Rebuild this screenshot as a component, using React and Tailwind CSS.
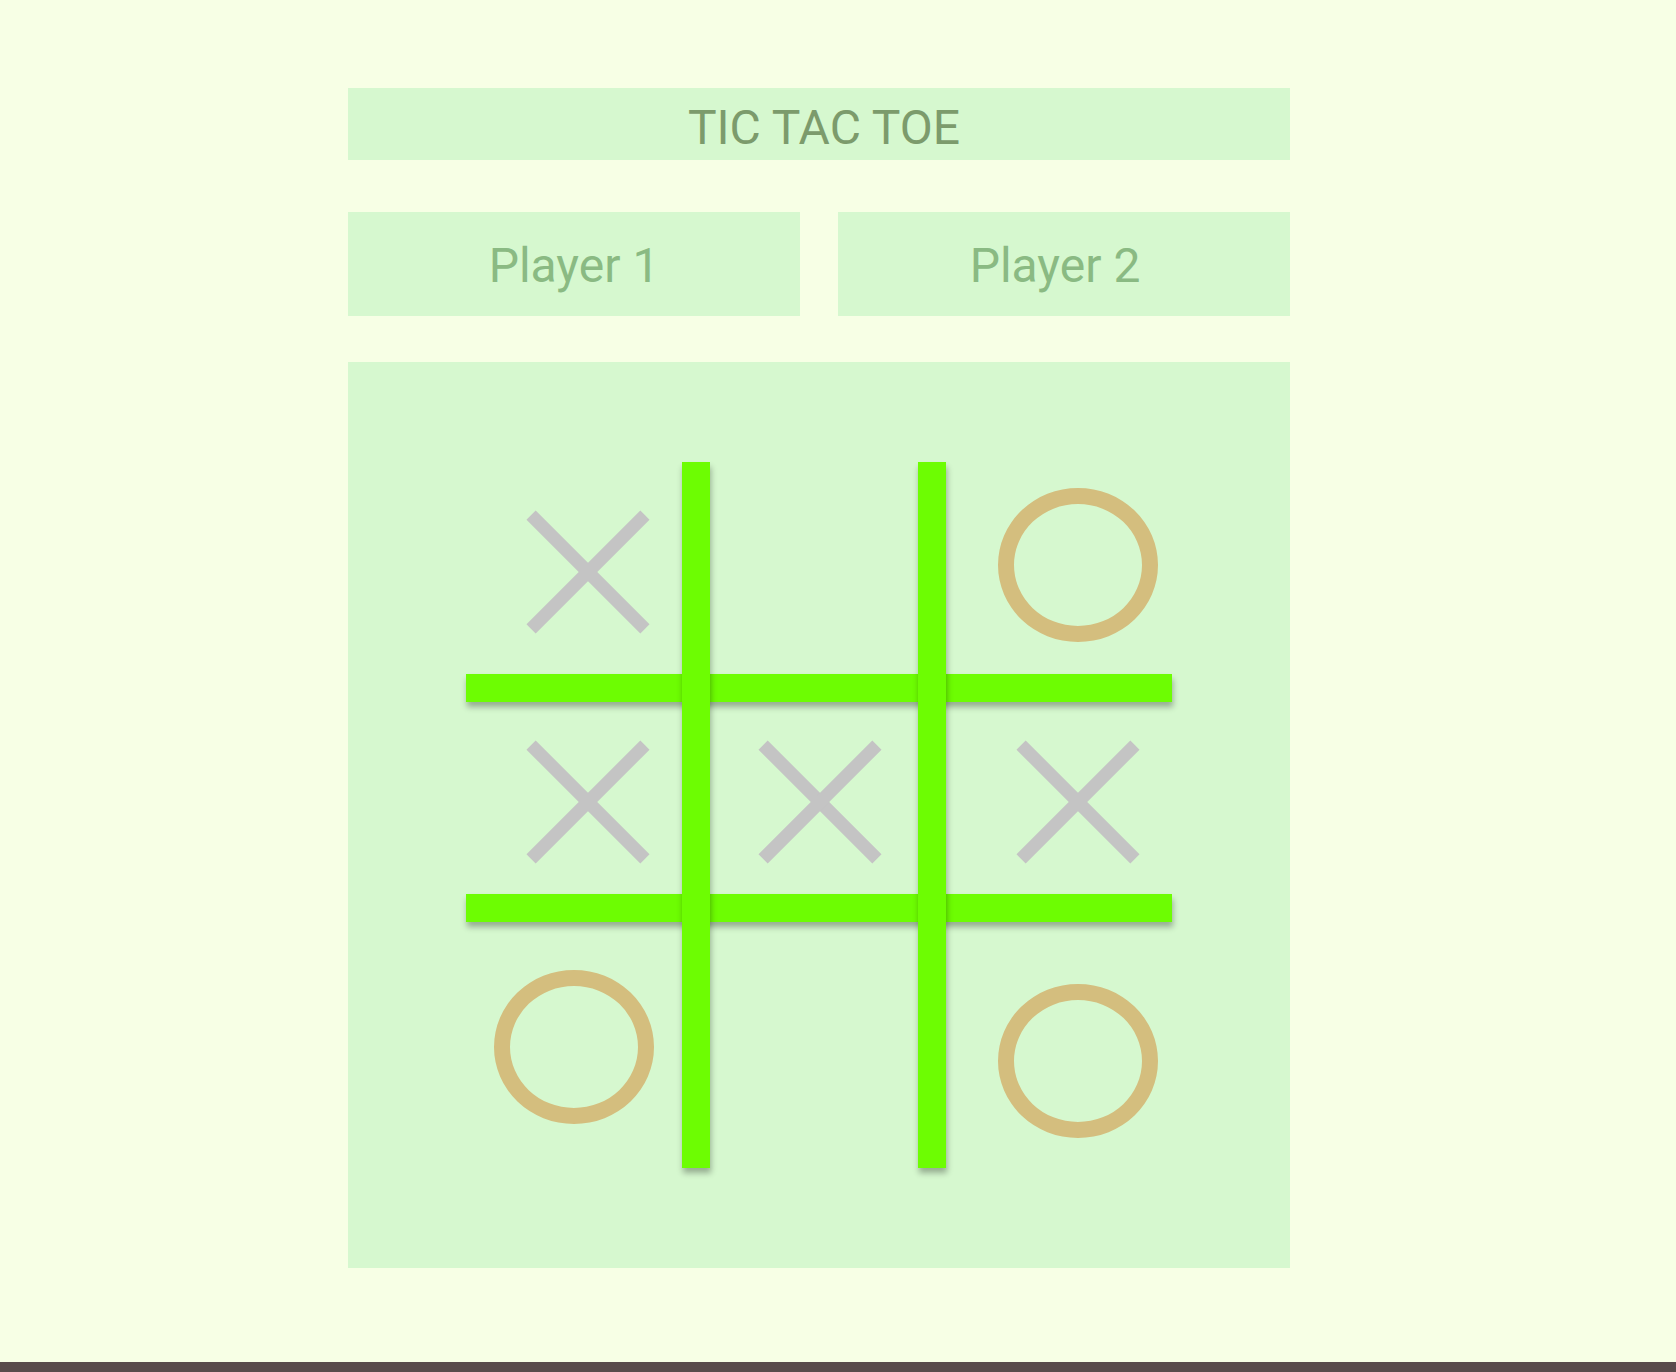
import React from "react";

function XMark({ cx, cy }) {
  return (
    <div
      className="absolute w-[123px] h-[123px]"
      style={{ left: cx - 61.5, top: cy - 61.5 }}
    >
      <div className="absolute left-1/2 top-1/2 w-[161px] h-[13px] -translate-x-1/2 -translate-y-1/2 rotate-45 bg-[#c4c4c4]" />
      <div className="absolute left-1/2 top-1/2 w-[161px] h-[13px] -translate-x-1/2 -translate-y-1/2 -rotate-45 bg-[#c4c4c4]" />
    </div>
  );
}

function OMark({ x, y }) {
  return (
    <div
      className="absolute w-[160px] h-[154px] rounded-[50%] border-[16px] border-[#d4be7e]"
      style={{ left: x, top: y }}
    />
  );
}

export default function App() {
  const lineShadow = "shadow-[1px_5px_6px_rgba(0,0,0,0.3)]";
  return (
    <div className="h-[1372px] flex flex-col bg-[#f7ffe5] font-['Roboto','Liberation_Sans',sans-serif]">
      <div className="flex-1 pl-[348px] pt-[88px]">
        <div className="w-[942px] flex flex-col">
          <div className="h-[72px] bg-[#d6f8cf] flex items-center justify-center pt-[7px] pl-[10px]">
            <span className="text-[48px] leading-none text-[#7c9b6c]">TIC TAC TOE</span>
          </div>
          <div className="mt-[52px] grid grid-cols-2 gap-[38px]">
            <div className="h-[104px] bg-[#d6f8cf] flex items-center justify-center pt-[4px]">
              <span className="text-[48px] leading-none text-[#8aba83]">Player 1</span>
            </div>
            <div className="h-[104px] bg-[#d6f8cf] flex items-center justify-center pt-[4px] pr-[18px]">
              <span className="text-[48px] leading-none text-[#8aba83]">Player 2</span>
            </div>
          </div>
          <div className="mt-[46px] h-[906px] bg-[#d6f8cf] relative">
            <div className={`absolute left-[118px] top-[312px] w-[706px] h-[28px] bg-[#6dfd02] ${lineShadow}`} />
            <div className={`absolute left-[118px] top-[532px] w-[706px] h-[28px] bg-[#6dfd02] ${lineShadow}`} />
            <div className={`absolute left-[334px] top-[100px] w-[28px] h-[706px] bg-[#6dfd02] ${lineShadow}`} />
            <div className={`absolute left-[570px] top-[100px] w-[28px] h-[706px] bg-[#6dfd02] ${lineShadow}`} />

            <XMark cx={239.5} cy={209.5} />
            <OMark x={650} y={126} />
            <XMark cx={239.5} cy={439.5} />
            <XMark cx={471.5} cy={439.5} />
            <XMark cx={729.5} cy={439.5} />
            <OMark x={146} y={608} />
            <OMark x={650} y={622} />
          </div>
        </div>
      </div>
      <div className="h-[10px] bg-[#594b4b]" />
    </div>
  );
}
